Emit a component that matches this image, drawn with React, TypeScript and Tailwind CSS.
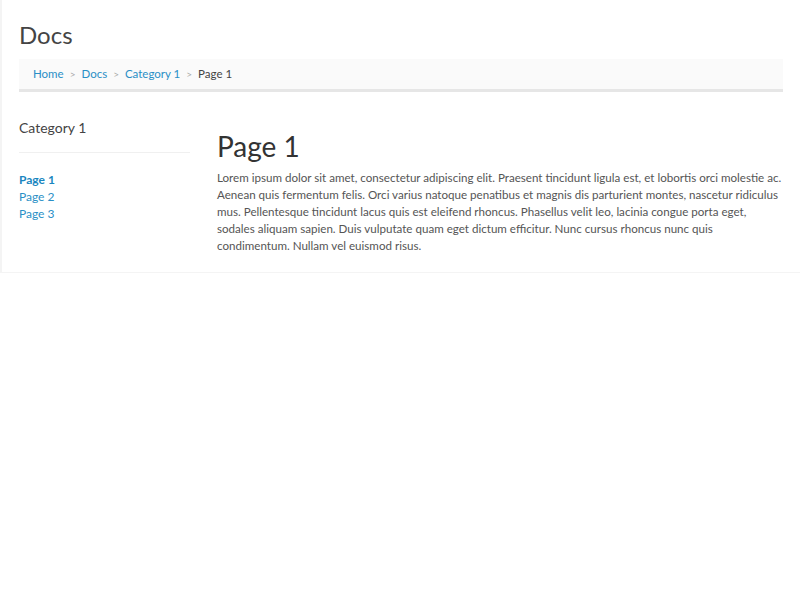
import React from "react";

export default function App() {
  const font = { fontFamily: '"Lato", "Liberation Sans", sans-serif' };
  return (
    <div className="w-[800px] h-[600px] bg-white" style={font}>
      <div className="border-l-2 border-b border-[#f4f4f4] h-[273px] pl-[17px] pr-[17px]">
        <div className="pt-[20px] text-[24px] leading-[30px] text-[#444]">Docs</div>
        <div className="mt-[9px] h-[33px] bg-[#fafafa] border-b-[3px] border-[#e6e6e6] flex items-center px-[14px] text-[11.5px] gap-[6px]">
          <span className="text-[#2a8fc6]">Home</span>
          <span className="text-[#aaa] text-[10px]">&gt;</span>
          <span className="text-[#2a8fc6]">Docs</span>
          <span className="text-[#aaa] text-[10px]">&gt;</span>
          <span className="text-[#2a8fc6]">Category 1</span>
          <span className="text-[#aaa] text-[10px]">&gt;</span>
          <span className="text-[#444]">Page 1</span>
        </div>
        <div className="flex mt-[26px]">
          <div className="w-[171px] shrink-0">
            <div className="text-[14px] leading-[20px] text-[#444] pb-[14px] border-b border-[#f0f0f0]">Category 1</div>
            <div className="pt-[18px] flex flex-col text-[12px] leading-[17px]">
              <span className="text-[#1a86c0] font-bold">Page 1</span>
              <span className="text-[#2a8fc6]">Page 2</span>
              <span className="text-[#2a8fc6]">Page 3</span>
            </div>
          </div>
          <div className="ml-[27px] flex-1">
            <div className="text-[28px] leading-[34px] text-[#333] mt-[11px]">Page 1</div>
            <p className="mt-[6px] text-[11.6px] leading-[17px] text-[#555]">
              Lorem ipsum dolor sit amet, consectetur adipiscing elit. Praesent tincidunt ligula est, et lobortis orci molestie ac. Aenean quis fermentum felis. Orci varius natoque penatibus et magnis dis parturient montes, nascetur ridiculus mus. Pellentesque tincidunt lacus quis est eleifend rhoncus. Phasellus velit leo, lacinia congue porta eget, sodales aliquam sapien. Duis vulputate quam eget dictum efficitur. Nunc cursus rhoncus nunc quis condimentum. Nullam vel euismod risus.
            </p>
          </div>
        </div>
      </div>
    </div>
  );
}
